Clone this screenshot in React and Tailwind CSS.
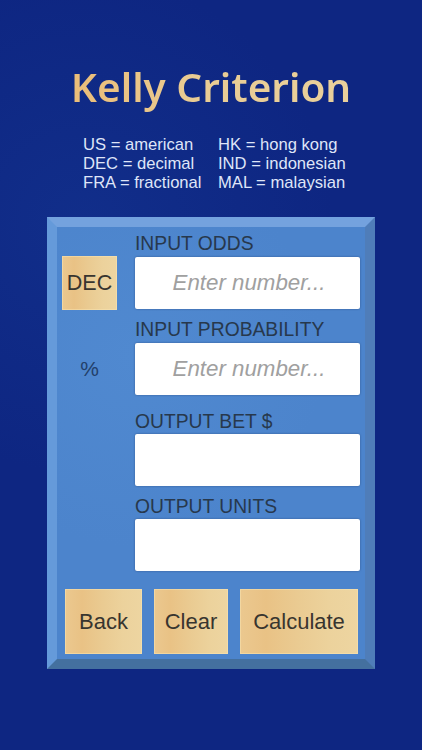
const sans = "font-['Liberation_Sans',Arial,sans-serif]";
const gold = "bg-[linear-gradient(90deg,#ebc88f_0%,#e9c285_22%,#eacb92_50%,#ecd29c_75%,#edd5a1_100%)] shadow-[inset_0_0_0_1px_rgba(250,230,180,0.5)] text-[#38352f] text-[22px]";

const Field = ({ label, placeholder, labelClass, side }) => (
    <div>
        <div className={`${labelClass} flex items-end pl-[78px]`}>
            <span className="text-[19.3px] leading-[24px] text-[#27384c]">{label}</span>
        </div>
        <div className="flex items-center">
            <div className="w-[78px] flex justify-center pr-[13px]">{side}</div>
            <div className="w-[225px] h-[52px] pl-[3px] bg-white rounded-[2px] shadow-[0_0_2px_rgba(30,50,90,0.6)] flex items-center justify-center">
                {placeholder && <span className="italic text-[22.3px] text-[#a0a0a0]">{placeholder}</span>}
            </div>
        </div>
    </div>
);

const App = () => {
    return (
        <div className={`${sans} w-[422px] h-[750px] overflow-hidden bg-[#0e2682] bg-[radial-gradient(circle_at_20%_30%,#112e8a_0%,#0e2682_40%)] flex flex-col items-center`}>
            <h1 className="mt-[60px] h-[54px] font-['Noto_Sans',sans-serif] font-semibold text-[40.5px] leading-[54px] bg-[linear-gradient(90deg,#ebbd78_0%,#e9cc94_45%,#e9d09c_100%)] bg-clip-text text-transparent">
                Kelly Criterion
            </h1>

            <div className="mt-[21px] w-full pl-[83px] flex text-[16.6px] leading-[19px] text-[#dfe5f8]">
                <div className="w-[135px]">
                    <p>US = american</p>
                    <p>DEC = decimal</p>
                    <p>FRA = fractional</p>
                </div>
                <div>
                    <p>HK = hong kong</p>
                    <p>IND = indonesian</p>
                    <p>MAL = malaysian</p>
                </div>
            </div>

            <div className="mt-[25px] w-[328px] h-[452px] border-[10px] border-t-[#74a2de] border-l-[#659ada] border-r-[#4f7db9] border-b-[#44709f] bg-[#4c84cc] bg-[radial-gradient(circle_at_25%_30%,#5089d0_0%,#4c84cc_50%)]">
                <Field
                    label="INPUT ODDS"
                    placeholder="Enter number..."
                    labelClass="h-[29px]"
                    side={
                        <div className={`${gold} w-[55px] h-[54px] flex items-center justify-center !text-[21.5px]`}>DEC</div>
                    }
                />
                <Field
                    label="INPUT PROBABILITY"
                    placeholder="Enter number..."
                    labelClass="h-[33px] pb-[1px]"
                    side={<span className="text-[21px] text-[#23406a]">%</span>}
                />
                <Field label="OUTPUT BET $" labelClass="h-[39px]" />
                <Field label="OUTPUT UNITS" labelClass="h-[33px]" />

                <div className="mt-[18px] ml-[8px] flex">
                    <button className={`${gold} w-[77px] h-[65px]`}>Back</button>
                    <button className={`${gold} ml-[12px] w-[74px] h-[65px]`}>Clear</button>
                    <button className={`${gold} ml-[12px] w-[118px] h-[65px]`}>Calculate</button>
                </div>
            </div>
        </div>
    );
};

export default App;
